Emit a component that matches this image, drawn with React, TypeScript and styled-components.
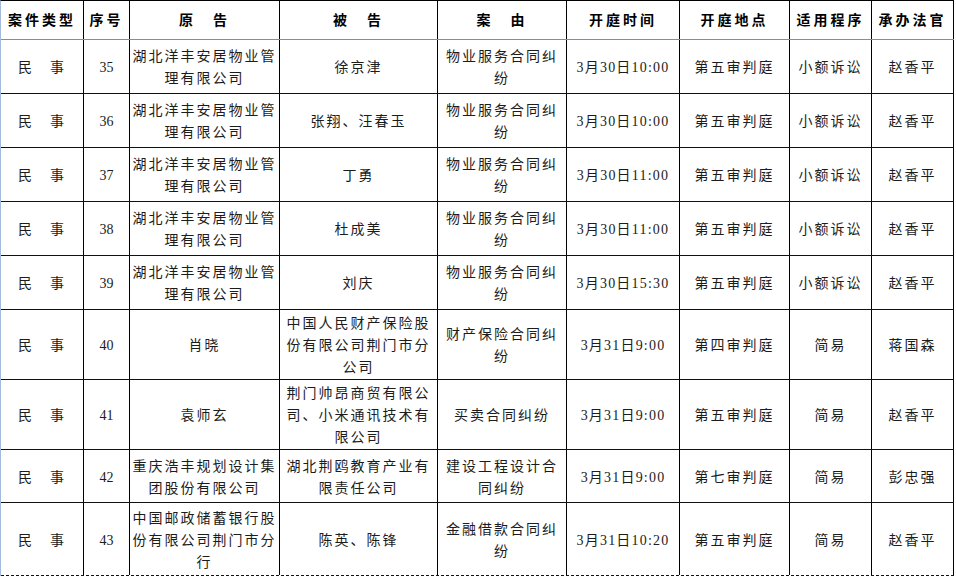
import React from 'react';
import styled, { createGlobalStyle } from 'styled-components';

const GlobalStyle = createGlobalStyle`
  html, body {
    margin: 0;
    padding: 0;
    background: #fff;
  }
  body {
    font-family: "Liberation Serif", "Noto Sans CJK SC", serif;
  }
`;

const COLUMNS = '83px 46px 150px 158px 129px 113px 110px 82px 82px';

const Sheet = styled.div`
  width: fit-content;
  border-left: 1px solid #a3badb;
  border-top: 1px solid #000;
`;

const Row = styled.div<{ $h: number; $dashed?: boolean; $head?: boolean }>`
  display: grid;
  grid-template-columns: ${COLUMNS};
  height: ${({ $h }) => $h}px;
  box-sizing: border-box;
  border-bottom: 1px ${({ $dashed }) => ($dashed ? 'dashed' : 'solid')}
    ${({ $head }) => ($head ? '#8c8c8c' : '#111')};
`;

const Cell = styled.div<{ $ls?: number }>`
  border-right: 1px solid #000;
  display: flex;
  align-items: center;
  justify-content: center;
  text-align: center;
  padding: 3px 2px 0;
  font-size: 14px;
  line-height: 22px;
  letter-spacing: ${({ $ls }) => ($ls ?? 2)}px;
  color: #1c1c1c;
  overflow: hidden;
`;

const HeadCell = styled(Cell)`
  font-weight: 700;
  color: #000;
  letter-spacing: 3px;
  padding-top: 1px;
`;

type Case = {
  no: number;
  plaintiff: string;
  defendant: string;
  cause: string;
  time: string;
  room: string;
  procedure: string;
  judge: string;
  h: number;
};

const cases: Case[] = [
  { no: 35, plaintiff: '湖北洋丰安居物业管理有限公司', defendant: '徐京津', cause: '物业服务合同纠纷', time: '3月30日10:00', room: '第五审判庭', procedure: '小额诉讼', judge: '赵香平', h: 54 },
  { no: 36, plaintiff: '湖北洋丰安居物业管理有限公司', defendant: '张翔、汪春玉', cause: '物业服务合同纠纷', time: '3月30日10:00', room: '第五审判庭', procedure: '小额诉讼', judge: '赵香平', h: 54 },
  { no: 37, plaintiff: '湖北洋丰安居物业管理有限公司', defendant: '丁勇', cause: '物业服务合同纠纷', time: '3月30日11:00', room: '第五审判庭', procedure: '小额诉讼', judge: '赵香平', h: 54 },
  { no: 38, plaintiff: '湖北洋丰安居物业管理有限公司', defendant: '杜成美', cause: '物业服务合同纠纷', time: '3月30日11:00', room: '第五审判庭', procedure: '小额诉讼', judge: '赵香平', h: 54 },
  { no: 39, plaintiff: '湖北洋丰安居物业管理有限公司', defendant: '刘庆', cause: '物业服务合同纠纷', time: '3月30日15:30', room: '第五审判庭', procedure: '小额诉讼', judge: '赵香平', h: 54 },
  { no: 40, plaintiff: '肖晓', defendant: '中国人民财产保险股份有限公司荆门市分公司', cause: '财产保险合同纠纷', time: '3月31日9:00', room: '第四审判庭', procedure: '简易', judge: '蒋国森', h: 70 },
  { no: 41, plaintiff: '袁师玄', defendant: '荆门帅昂商贸有限公司、小米通讯技术有限公司', cause: '买卖合同纠纷', time: '3月31日9:00', room: '第五审判庭', procedure: '简易', judge: '赵香平', h: 70 },
  { no: 42, plaintiff: '重庆浩丰规划设计集团股份有限公司', defendant: '湖北荆鸥教育产业有限责任公司', cause: '建设工程设计合同纠纷', time: '3月31日9:00', room: '第七审判庭', procedure: '简易', judge: '彭忠强', h: 53 },
  { no: 43, plaintiff: '中国邮政储蓄银行股份有限公司荆门市分行', defendant: '陈英、陈锋', cause: '金融借款合同纠纷', time: '3月31日10:20', room: '第五审判庭', procedure: '简易', judge: '赵香平', h: 73 },
];

const headers = ['案件类型', '序号', '原　告', '被　告', '案　由', '开庭时间', '开庭地点', '适用程序', '承办法官'];

export default function App() {
  return (
    <>
      <GlobalStyle />
      <Sheet>
        <Row $h={39} $head>
          {headers.map((h) => (
            <HeadCell key={h}>{h}</HeadCell>
          ))}
        </Row>
        {cases.map((c, i) => (
          <Row key={c.no} $h={c.h} $dashed={i === cases.length - 1}>
            <Cell>民　事</Cell>
            <Cell $ls={0}>{c.no}</Cell>
            <Cell>{c.plaintiff}</Cell>
            <Cell>{c.defendant}</Cell>
            <Cell>{c.cause}</Cell>
            <Cell $ls={1.2}>{c.time}</Cell>
            <Cell>{c.room}</Cell>
            <Cell>{c.procedure}</Cell>
            <Cell>{c.judge}</Cell>
          </Row>
        ))}
      </Sheet>
    </>
  );
}
